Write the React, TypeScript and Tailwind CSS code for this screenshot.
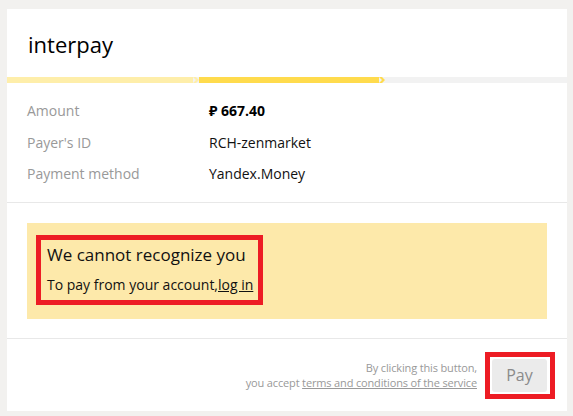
import React from 'react';

const rows = [
  { label: 'Amount', value: '₽ 667.40', bold: true },
  { label: "Payer's ID", value: 'RCH-zenmarket' },
  { label: 'Payment method', value: 'Yandex.Money' },
];

const Chevron = ({ color }: { color: string }) => (
  <svg width="6" height="6" viewBox="0 0 6 6" className="shrink-0">
    <polygon points="0,0 3,0 6,3 3,6 0,6 3,3" fill={color} />
  </svg>
);

export default function App() {
  return (
    <div
      className="min-h-[416px] w-[573px] bg-[#f2f1ef] pt-[9px] pl-[7px]"
      style={{ fontFamily: '"Open Sans", "Noto Sans", sans-serif' }}
    >
      <div className="w-[560px] h-[402px] bg-white flex flex-col">
        {/* header */}
        <div className="h-[68px] pl-[21px] pt-[21px]">
          <h1 className="text-[22px] leading-[28px] text-[#000]">interpay</h1>
        </div>

        {/* progress */}
        <div className="flex h-[6px] bg-[#f2f2f2]">
          <div className="w-[186px] bg-[#feeeaa]" />
          <Chevron color="#feeeaa" />
          <div className="w-[180px] bg-[#ffdb4d]" />
          <Chevron color="#ffdb4d" />
        </div>

        {/* details */}
        <div className="px-[20px] pt-[12px] pb-[12px] border-b border-[#e8e8e8]">
          {rows.map((r) => (
            <div key={r.label} className="flex h-[31.5px] items-center text-[14px]">
              <span className="w-[182px] text-[#999]">{r.label}</span>
              <span className={r.bold ? 'font-bold text-black' : 'text-[#111]'}>{r.value}</span>
            </div>
          ))}
        </div>

        {/* notice */}
        <div className="px-[20px] pt-[20px] pb-[19px] border-b border-[#e8e8e8]">
          <div className="bg-[#fde9aa] h-[96px] pl-[9px] pt-[12px]">
            <div className="inline-flex flex-col border-[5px] border-[#ed1c24] pl-[6px] pr-[5px] pt-[2px] pb-[4px]">
              <div className="text-[17px] leading-[26px] text-[#111]">We cannot recognize you</div>
              <div className="text-[14px] leading-[22px] mt-[6px] text-[#111]">
                To pay from your account,<span className="underline">log in</span>
              </div>
            </div>
          </div>
        </div>

        {/* footer */}
        <div className="flex justify-end items-center pr-[12px] pt-[13px]">
          <div className="text-right text-[11px] leading-[15px] tracking-[-0.15px] text-[#999] mr-[8px]">
            <div>By clicking this button,</div>
            <div>
              you accept <span className="underline">terms and conditions of the service</span>
            </div>
          </div>
          <div className="border-[5px] border-[#ed1c24] pl-[2px] pt-[2px] pr-[3px] pb-[2px]">
            <button className="w-[55px] h-[33px] rounded-[3px] bg-[#ebebeb] text-[16px] text-[#8a8a8a]">
              Pay
            </button>
          </div>
        </div>
      </div>
    </div>
  );
}
